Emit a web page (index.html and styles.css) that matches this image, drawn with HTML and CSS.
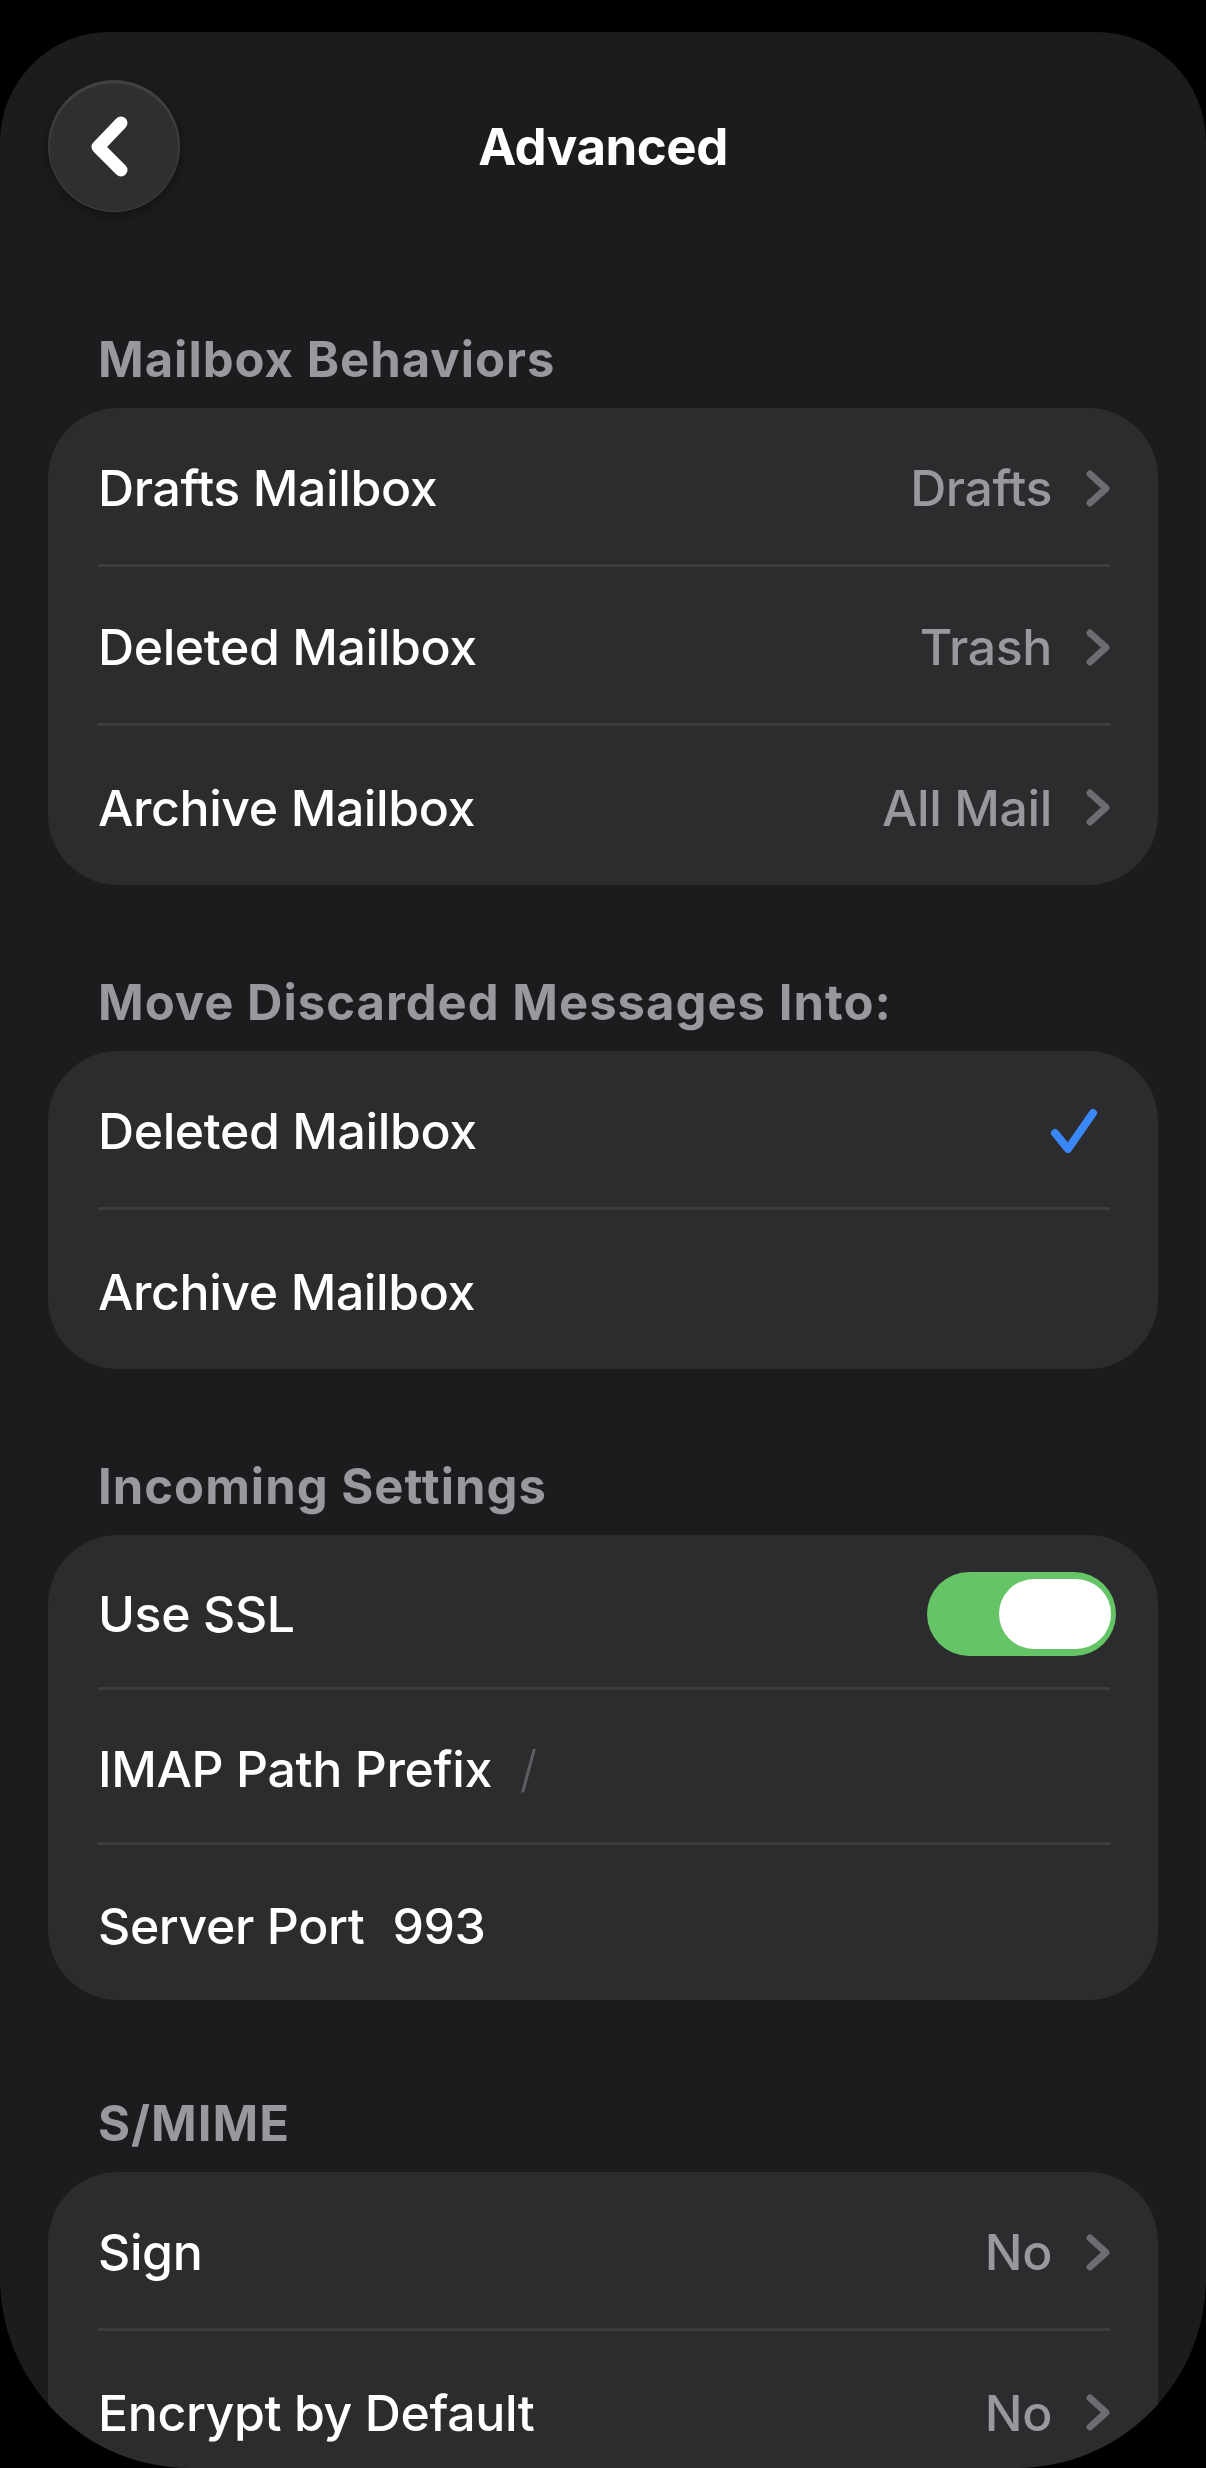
FILE: index.html
```html
<!DOCTYPE html>
<html lang="en">
<head>
  <meta charset="UTF-8">
  <title>Advanced</title>
  <link rel="stylesheet" href="styles.css">
</head>
<body>

<div class="sheet">
  <header class="nav">
    <button class="back" aria-label="Back">
      <svg viewBox="0 0 132 132" width="132" height="132">
        <path d="M73 43 L50 67 L73 90" fill="none" stroke="#fff" stroke-width="13" stroke-linecap="round" stroke-linejoin="round"/>
      </svg>
    </button>
    <h1>Advanced</h1>
    <span></span>
  </header>

  <section class="group">
    <h2>Mailbox Behaviors</h2>
    <div class="card">
      <div class="row">
        <span class="label">Drafts Mailbox</span>
        <span class="value">Drafts</span>
        <svg class="chev" viewBox="0 0 24 37"><path d="M4 4 L20 18.5 L4 33"/></svg>
      </div>
      <div class="row">
        <span class="label">Deleted Mailbox</span>
        <span class="value">Trash</span>
        <svg class="chev" viewBox="0 0 24 37"><path d="M4 4 L20 18.5 L4 33"/></svg>
      </div>
      <div class="row">
        <span class="label">Archive Mailbox</span>
        <span class="value">All Mail</span>
        <svg class="chev" viewBox="0 0 24 37"><path d="M4 4 L20 18.5 L4 33"/></svg>
      </div>
    </div>
  </section>

  <section class="group">
    <h2>Move Discarded Messages Into:</h2>
    <div class="card">
      <div class="row">
        <span class="label">Deleted Mailbox</span>
        <svg class="check" viewBox="0 0 52 48"><path d="M7 26 L20 42 L45 6"/></svg>
      </div>
      <div class="row">
        <span class="label">Archive Mailbox</span>
      </div>
    </div>
  </section>

  <section class="group">
    <h2>Incoming Settings</h2>
    <div class="card">
      <div class="row row-field">
        <span class="label">Use SSL</span>
        <span class="toggle"><span class="knob"></span></span>
      </div>
      <div class="row row-field">
        <span class="label">IMAP Path Prefix</span>
        <span class="field placeholder">/</span>
      </div>
      <div class="row row-field">
        <span class="label">Server Port</span>
        <span class="field">993</span>
      </div>
    </div>
  </section>

  <section class="group group-last">
    <h2>S/MIME</h2>
    <div class="card">
      <div class="row">
        <span class="label">Sign</span>
        <span class="value">No</span>
        <svg class="chev" viewBox="0 0 24 37"><path d="M4 4 L20 18.5 L4 33"/></svg>
      </div>
      <div class="row">
        <span class="label">Encrypt by Default</span>
        <span class="value">No</span>
        <svg class="chev" viewBox="0 0 24 37"><path d="M4 4 L20 18.5 L4 33"/></svg>
      </div>
    </div>
  </section>
</div>

</body>
</html>
```

FILE: styles.css
```css
html, body {
  margin: 0;
  background: #000;
  overflow: hidden;
  font-family: Inter, 'Noto Sans', sans-serif;
  color: #fff;
}
.sheet {
  margin-top: 32px;
  height: 2436px;
  background: #1c1c1e;
  border-radius: 110px 110px 190px 190px;
  overflow: hidden;
  padding: 48px 48px 0 48px;
  box-sizing: border-box;
}
.nav {
  display: grid;
  grid-template-columns: 132px 1fr 132px;
  align-items: center;
  height: 132px;
}
.back {
  width: 132px;
  height: 132px;
  padding: 0;
  border-radius: 50%;
  background: #2f2f31;
  border: 1px solid rgba(255, 255, 255, 0.07);
  box-shadow: inset 0 2px 2px rgba(255, 255, 255, 0.12), 0 4px 14px rgba(0, 0, 0, 0.35);
  display: flex;
  box-sizing: border-box;
}
.back svg {
  margin: -1px;
}
.nav h1 {
  margin: 0;
  text-align: center;
  font-size: 51px;
  font-weight: 700;
  letter-spacing: -0.5px;
}
.group {
  margin-top: 120px;
}
.group + .group {
  margin-top: 90px;
}
.group-last {
  margin-top: 96px !important;
}
.group h2 {
  margin: 0 0 20px 50px;
  font-size: 49px;
  line-height: 56px;
  font-weight: 700;
  color: #98989e;
  letter-spacing: 1px;
}
.card {
  background: #2c2c2e;
  border-radius: 70px;
  padding: 0 48px 0 50px;
}
.row {
  display: flex;
  align-items: center;
  height: 159px;
  padding-top: 4px;
  box-sizing: border-box;
  border-bottom: 3px solid #3d3d40;
  font-size: 50px;
  font-weight: 500;
  letter-spacing: -0.4px;
}
.row:last-child {
  border-bottom: none;
}
.row-field {
  height: 155px;
  padding-top: 6px;
}
.label {
  flex: 0 0 auto;
}
.value {
  margin-left: auto;
  color: #98989e;
}
.chev {
  width: 24px;
  height: 37px;
  margin-left: 34px;
  fill: none;
  stroke: #6c6c71;
  stroke-width: 7;
  stroke-linecap: round;
  stroke-linejoin: round;
}
.check {
  width: 52px;
  height: 48px;
  margin-left: auto;
  margin-right: 10px;
  fill: none;
  stroke: #3b87f6;
  stroke-width: 8;
  stroke-linecap: round;
  stroke-linejoin: round;
}
.toggle {
  margin-left: auto;
  margin-right: -6px;
  width: 189px;
  height: 84px;
  border-radius: 42px;
  background: #65c466;
  display: flex;
  justify-content: flex-end;
  align-items: center;
  padding: 0 5px;
  box-sizing: border-box;
}
.knob {
  width: 112px;
  height: 70px;
  border-radius: 35px;
  background: #fff;
}
.field {
  margin-left: 28px;
}
.placeholder {
  color: #5e5e62;
  font-weight: 300;
}
```
